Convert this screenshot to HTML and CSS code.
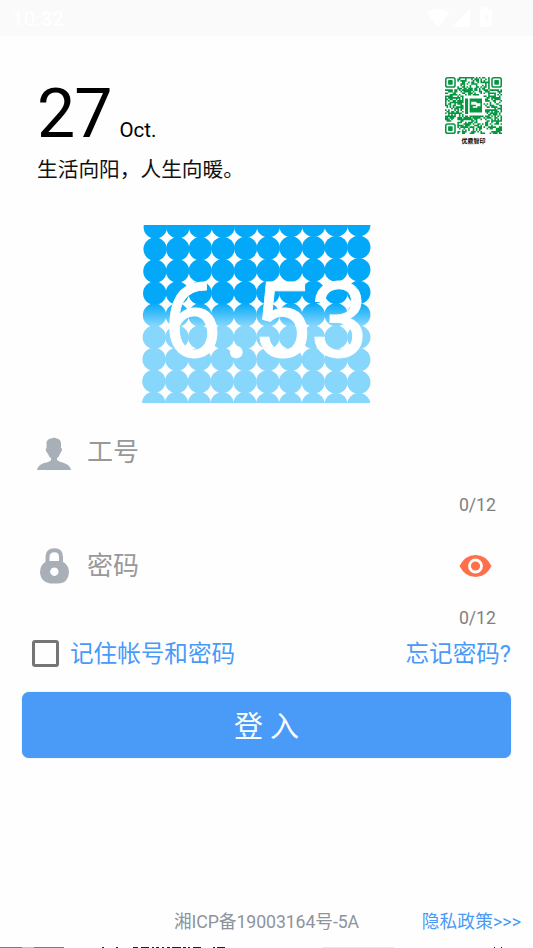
FILE: index.html
```html
<!DOCTYPE html>
<html lang="zh-CN">
<head>
<meta charset="utf-8">
<title>登入</title>
<link rel="stylesheet" href="styles.css">
</head>
<body>
<div class="screen">
  <header class="status">
    <span class="clock">10:32</span>
    <svg class="status-icons" width="68" height="24" viewBox="0 0 68 24" fill="#fff">
      <path d="M0 7Q11 -2 22 7L11 21Z"/>
      <path d="M25 21L43 3V21Z"/>
      <path fill-rule="evenodd" d="M54 3h2V1h5v2h2q2 0 2 2v14q0 2-2 2h-8q-2 0-2-2V5q0-2 1-2zM60 7l-4 6h3v5l4-7h-3z"/>
    </svg>
  </header>
  <section class="intro">
    <div>
      <div class="date"><span class="day">27</span><span class="month">Oct.</span></div>
      <p class="motto">生活向阳，人生向暖。</p>
    </div>
    <div class="qr-box">
      <svg id="qr" width="57" height="57" viewBox="0 0 37 37" fill="#079542"></svg>
      <span class="qr-label">优鼎智印</span>
    </div>
  </section>
  <svg class="art" width="230" height="178" viewBox="0 0 230 178">
    <defs>
      <linearGradient id="shade" gradientUnits="userSpaceOnUse" x1="0" y1="78" x2="0" y2="101">
        <stop offset="0" stop-color="#03a9f8"/><stop offset="1" stop-color="#87d6fc"/>
      </linearGradient>
    </defs>
    <g id="dots" fill="url(#shade)"></g>
    <text class="version" y="132"><tspan x="21">6</tspan><tspan x="81">.</tspan><tspan x="110">5</tspan><tspan x="168">3</tspan></text>
  </svg>
  <form class="login">
    <div class="field">
      <svg class="user" width="34" height="34" viewBox="0 0 34 34" fill="#a9afb7">
        <path d="M9.500 5Q11 1.500 14 1.500Q17 0 20 1.500Q24.500 2.500 24 8V11Q26 12 24.500 14L23 17Q22 20 20 21V23Q22 25 27 26Q33 28 34 33H0Q1 28 7 26Q13 25 14 23V21Q12 20 11 17L9 14Q8 12 9.500 11Z"/>
      </svg>
      <span class="placeholder">工号</span>
    </div>
    <div class="count first">0/12</div>
    <div class="field second">
      <svg width="34" height="36" viewBox="0 0 34 36">
        <path d="M10.5 16V9Q10.5 2.2 17.5 2.2Q24 2.2 24 9V16" fill="none" stroke="#a9afb7" stroke-width="4"/>
        <path fill="#a9afb7" fill-rule="evenodd" d="M10 13H24Q32 16 32 24Q31 35.5 21 35.5H13Q4 34 3 25Q3 16 10 13ZM17.3 19.5a4.2 4.2 0 1 0 .1 0Z"/>
      </svg>
      <span class="placeholder">密码</span>
      <svg class="eye" width="33" height="24" viewBox="0 0 33 24">
        <path d="M.5 12Q6 1 16.500 1T32.500 12Q27 23 16.500 23T.5 12Z" fill="#ff6f4a"/>
        <circle cx="16.500" cy="12" r="6" fill="#ff6f4a" stroke="#fff" stroke-width="2.800"/>
      </svg>
    </div>
    <div class="count">0/12</div>
    <div class="options">
      <span class="checkbox"></span><span>记住帐号和密码</span><span class="forgot">忘记密码?</span>
    </div>
    <button type="button" class="submit">登 入</button>
  </form>
  <footer class="footer"><span>湘ICP备19003164号-5A</span><a class="privacy">隐私政策&gt;&gt;&gt;</a></footer>
  <svg class="edge" width="533" height="1" viewBox="0 0 533 1">
    <path fill="#8069df" d="M0 0h64v1H0z"/><path fill="#c8bff0" d="M22 0h12v1H22z"/>
    <path fill="#211b33" d="M102 0h2v1h-2zM116 0h2v1h-2zM133 0h5v1h-5zM141 0h8v1h-8zM152 0h2v1h-2zM156 0h3v1h-3zM162 0h2v1h-2zM167 0h3v1h-3zM172 0h9v1h-9zM183 0h3v1h-3zM188 0h2v1h-2zM193 0h8v1h-8zM213 0h2v1h-2zM217 0h8v1h-8zM494 0h1v1h-1zM501 0h1v1h-1z"/>
    <path fill="#e7e7ee" d="M322 0h72v1h-72z"/>
  </svg>
</div>
<script src="art.js"></script>
</body>
</html>
```
FILE: art.js
```js
// Grid of touching discs; rows tilt very slightly from left to right.
let dots = '';
for (let r = 0; r < 9; r++) {
  for (let c = 0; c < 10; c++) {
    const left = 13.3 - r * 0.2;
    const x = left + (216.800 - left) * c / 9;
    const y = 1 + r * 22.250 + (r - 5) * 0.45 * (c - 4.500) / 9;
    dots += `<circle cx="${x.toFixed(2)}" cy="${y.toFixed(2)}" r="11.65"/>`;
  }
}
document.getElementById('dots').innerHTML = dots;

// QR modules with three finder marks and a clear space for the logo.
const N = 37;
let seed = 29, qr = '';
const random = () => (seed = (seed * 16807) % 2147483647) / 2147483647;
for (let y = 0; y < N; y++) {
  for (let x = 0; x < N; x++) {
    const on = random() < 0.56;
    const finder = (x < 8 && y < 8) || (x > 28 && y < 8) || (x < 8 && y > 28);
    const logo = x > 11 && x < 25 && y > 11 && y < 25;
    if (on && !finder && !logo) qr += `M${x} ${y}h1.05v1.05h-1.05z`;
  }
}
const marks = [[0, 0], [30, 0], [0, 30]].map(([x, y]) =>
  `<rect x="${x + .5}" y="${y + .5}" width="6" height="6" rx="1.2" fill="none" stroke="#079542"/><rect x="${x + 2}" y="${y + 2}" width="3" height="3" rx=".5"/>`).join('');
document.getElementById('qr').innerHTML = `<path d="${qr}"/>${marks}
  <path d="M13 14h2v10h-2zM16 14h8v9h-8z"/>
  <path d="M17 16h3l1 1h2v2h-2v1h-3v-1h2v-1h-3z" fill="#fff"/>`;
```
FILE: styles.css
```css
* { box-sizing: border-box; }
body { margin: 0; background: #fefefe; font-family: Roboto, "Noto Sans CJK SC", sans-serif; font-weight: 400; }
.screen { width: 533px; height: 948px; overflow: hidden; display: flex; flex-direction: column; }
svg { display: block; flex: none; }
.status { height: 36px; flex: none; background: #fafafa; display: flex; align-items: center; justify-content: space-between; padding: 0 38px 0 12px; color: #fff; }
.clock { font-size: 20.500px; font-weight: 500; line-height: 36px; padding-top: 1px; }
.status-icons { margin-top: -1px; }
.intro { height: 189px; flex: none; display: flex; justify-content: space-between; padding: 37px 31px 0 37px; }
.date { height: 80px; display: flex; align-items: baseline; color: #000; }
.day { font-size: 68px; line-height: 82px; letter-spacing: -1px; }
.month { font-size: 20.500px; margin-left: 8px; }
.motto { margin: 2px 0 0; font-size: 20.700px; line-height: 30px; color: #111; }
.qr-box { padding-top: 4px; width: 57px; }
.qr-label { display: block; margin-top: 3px; font-size: 6px; line-height: 7px; font-weight: 700; text-align: center; }
.art { margin-left: 142px; }
.version { font-family: Roboto, sans-serif; font-size: 105px; font-weight: 400; fill: #fff; stroke: #fff; stroke-width: .8px; }
.login { padding: 31px 22px 0; }
.field { height: 36px; display: flex; align-items: center; padding: 0 19px 0 15px; }
.user { position: relative; top: 2px; }
.placeholder { margin-left: 16px; font-size: 26px; line-height: 36px; color: #999; }
.eye { margin-left: auto; }
.count { padding-right: 15px; font-size: 17.700px; line-height: 24px; text-align: right; color: #808080; }
.first { margin-top: 23px; }
.second { margin-top: 31px; }
.login .count:nth-of-type(4) { margin-top: 22px; }
.options { display: flex; align-items: center; margin-top: 6px; height: 35px; padding-left: 10px; font-size: 23.600px; line-height: 33px; color: #499af8; }
.options span:not(.checkbox) { padding-top: 1px; }
.checkbox { width: 27px; height: 27px; border: 3px solid #757575; border-radius: 3px; margin-right: 11px; }
.forgot { margin-left: auto; }
.submit { display: block; width: 489px; height: 66px; margin: 21px 0 0; padding: 0 0 2px; border: 0; border-radius: 7px; background: #4a9bf8; box-shadow: 0 0 1px #8db8e8; color: #fff; font: 400 29px Roboto, "Noto Sans CJK SC", sans-serif; }
.footer { margin-top: auto; height: 40px; display: flex; justify-content: space-between; align-items: flex-start; padding: 0 12px 0 174px; font-size: 17.700px; line-height: 28px; letter-spacing: -.08px; color: #8d949d; }
.privacy { color: #499af8; letter-spacing: .1px; }
.edge { margin-top: -1px; }
```
